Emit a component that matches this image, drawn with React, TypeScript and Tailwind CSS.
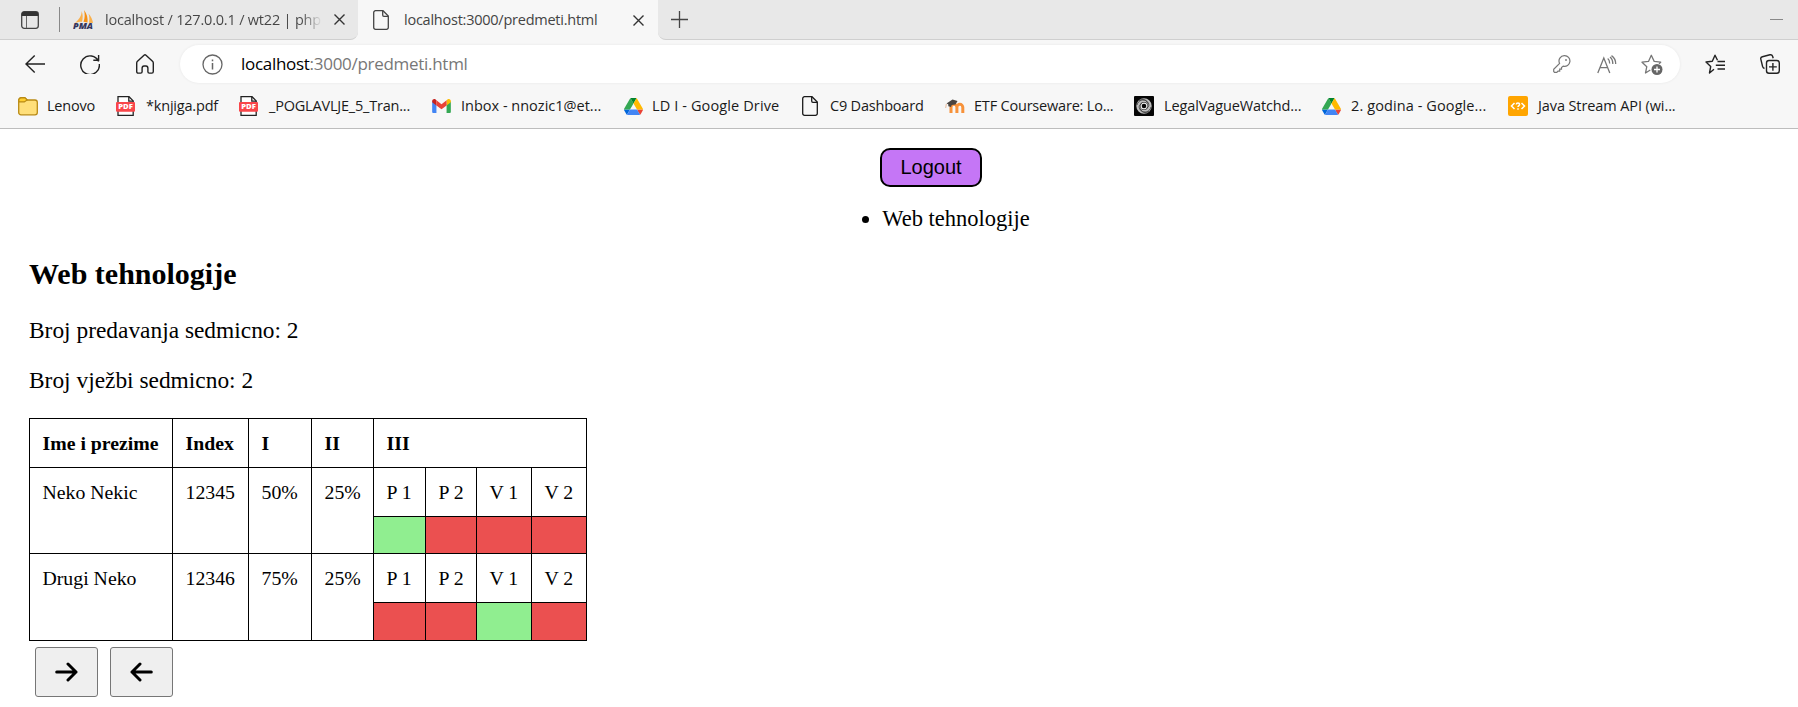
import type { ReactNode } from "react";

function FileIcon() {
  return (
    <svg width="16" height="20" viewBox="0 0 16 20" fill="none" stroke="currentColor" strokeWidth="1.3">
      <path d="M2.7.7H10L15.3 6v11.5a1.8 1.8 0 0 1-1.8 1.8h-11a1.8 1.8 0 0 1-1.8-1.8v-15A1.8 1.8 0 0 1 2.7.7Z" />
      <path d="M9.7.9v4.2c0 .7.5 1.2 1.2 1.2h4.2" />
    </svg>
  );
}

function PdfIcon() {
  return (
    <svg width="19" height="20" viewBox="0 0 19 20">
      <path d="M2 .7h11l4.2 4.2v14.4H2Z" fill="#fff" stroke="#222" strokeWidth="1.3" />
      <path d="M12.8.7v4.4h4.4" fill="none" stroke="#222" strokeWidth="1.3" />
      <rect y="6" width="19" height="9.8" rx="1" fill="#f9464a" />
      <text x="2.2" y="13.4" fontFamily="Open Sans, sans-serif" fontWeight="800" fontSize="6.8" fill="#fff" textLength="14.6" lengthAdjust="spacingAndGlyphs">PDF</text>
    </svg>
  );
}

function FolderIcon() {
  return (
    <svg width="20" height="19" viewBox="0 0 20 19">
      <path d="M.7 3a2.3 2.3 0 0 1 2.3-2.300h3.800L9.200 3H17A2.300 2.300 0 0 1 19.300 5.300v10.200a2.300 2.300 0 0 1-2.300 2.300H3A2.300 2.300 0 0 1 .7 15.500Z" fill="#ffdf7a" stroke="#b98a14" strokeWidth="1.300" />
      <path d="M.9 4.900h5.400L9.200 3 7 .9H3A2.100 2.100 0 0 0 .9 3Z" fill="#ffce2f" stroke="#b98a14" strokeWidth="1.100" />
    </svg>
  );
}

function GmailIcon() {
  return (
    <svg width="19" height="14" viewBox="0 0 18 13.500">
      <path d="M0 2.200V12.300c0 .7.500 1.200 1.200 1.200h2.900V5.300Z" fill="#4285f4" />
      <path d="M13.900 5.300v8.200h2.900c.7 0 1.200-.500 1.200-1.200V2.200Z" fill="#34a853" />
      <path d="M13.900 1.300v4.900L18 3.100V2c0-1.700-2-2.600-3.300-1.600Z" fill="#fbbc04" />
      <path d="M0 2v1.100l4.100 3.100V1.300L3.300.4C2-.5 0 .4 0 2Z" fill="#c5221f" />
      <path d="M4.100 6.200V1.300L9 5l4.900-3.700v4.900L9 9.900Z" fill="#ea4335" />
    </svg>
  );
}

function DriveIcon() {
  return (
    <svg width="19" height="17" viewBox="0 0 87.300 78">
      <path d="m6.600 66.850 3.850 6.650c.8 1.400 1.950 2.500 3.300 3.300l13.750-23.800H0c0 1.550.4 3.100 1.200 4.500Z" fill="#0066da" />
      <path d="M43.650 25 29.900 1.200c-1.350.8-2.500 1.900-3.300 3.300L1.200 48.500A9 9 0 0 0 0 53h27.500Z" fill="#34a853" />
      <path d="M73.550 76.800c1.350-.8 2.500-1.900 3.300-3.300l1.600-2.750L86.100 57.500c.8-1.400 1.200-2.950 1.200-4.500H59.800l5.850 11.500Z" fill="#ea4335" />
      <path d="M43.650 25 57.400 1.200C56.050.4 54.500 0 52.900 0H34.400c-1.600 0-3.150.45-4.500 1.200Z" fill="#00832d" />
      <path d="M59.800 53H27.500L13.750 76.800c1.350.8 2.900 1.200 4.500 1.200h50.800c1.600 0 3.150-.45 4.500-1.200Z" fill="#4285f4" />
      <path d="M73.400 26.500 60.700 4.500c-.8-1.400-1.950-2.500-3.300-3.300L43.650 25 59.800 53h27.450c0-1.550-.4-3.100-1.200-4.500Z" fill="#ffba00" />
    </svg>
  );
}

function MoodleIcon() {
  return (
    <svg width="20" height="14" viewBox="0 0 20 14">
      <path d="M6 14V8.300a2.500 2.500 0 0 1 5.900 0V14M11.900 8.300a2.500 2.500 0 0 1 5.900 0V14" fill="none" stroke="#f7923a" strokeWidth="3" />
      <path d="m1.500 4.500 6-4 5 1.500-2 3.500-3.800.4-.7 2-2.700-.7v-2Z" fill="#4a4440" />
      <path d="m1.300 5-.6 4" stroke="#e5b99a" />
    </svg>
  );
}

function SwirlIcon() {
  return (
    <svg width="20" height="20" viewBox="0 0 20 20" fill="none">
      <rect width="20" height="20" rx="1" fill="#050505" />
      <circle cx="10" cy="10" r="5.800" stroke="#bdbdbd" strokeWidth="3.800" />
      <circle cx="10" cy="10" r="2.900" stroke="#eee" strokeWidth="1.200" />
      <path d="M3 9c1-5 7-6.500 10-3.500s2 6-1 7M17 11c-1 5-7 6.500-10 3.500s-2-6 1-7M5 4.500c3-2 8-1 9 3M15 15.500c-3 2-8 1-9-3" stroke="#333" strokeWidth=".8" />
    </svg>
  );
}

function CodeIcon() {
  return (
    <svg width="20" height="20" viewBox="0 0 20 20" fill="none" stroke="#fff" strokeWidth="1.500">
      <rect width="20" height="20" rx="2" fill="#ffa500" stroke="none" />
      <path d="M6.500 7 3.500 10l3 3M13.500 7l3 3-3 3M8.300 8.600c0-2 3.300-2 3.300 0 0 1-1.600 1.200-1.600 2.500M10 12.200v1.500" />
    </svg>
  );
}

function PmaIcon() {
  return (
    <svg width="21" height="20" viewBox="0 0 21 20">
      <path d="M8.500 1c.5 4-2 8-6.500 12 3-1 5-1.300 7-1.200C10 8 10 4 8.500 1Z" fill="#f9b04c" />
      <path d="M11 0c3 4 4 8 3.500 12.500l-4-.7C12 8 12 4 11 0Z" fill="#f58f13" />
      <path d="M15.500 3.500c2.500 3 4 6 4.500 9.500l-4-.3c.6-3 .5-6-.5-9.200Z" fill="#f9b04c" />
      <text x="0" y="19.300" fontFamily="Open Sans, sans-serif" fontWeight="800" fontStyle="italic" fontSize="8" fill="#34355c" textLength="20" lengthAdjust="spacingAndGlyphs">PMA</text>
    </svg>
  );
}

function CloseIcon() {
  return (
    <svg width="11" height="11" viewBox="0 0 11 11" fill="none" stroke="#333" strokeWidth="1.400">
      <path d="m.5.500 10 10M10.500.500l-10 10" />
    </svg>
  );
}

type Bookmark = { icon: ReactNode; label: string; item: string; slot: string; text: string };

const bookmarks: Bookmark[] = [
  { icon: <FolderIcon />, label: "Lenovo", item: "w-[98px]", slot: "w-[29px]", text: "tracking-[-0.2px]" },
  { icon: <PdfIcon />, label: "*knjiga.pdf", item: "w-[123px]", slot: "w-[30px]", text: "tracking-[-0.2px]" },
  { icon: <PdfIcon />, label: "_POGLAVLJE_5_Tran...", item: "w-[193px]", slot: "w-[30px]", text: "tracking-[-0.2px]" },
  { icon: <GmailIcon />, label: "Inbox - nnozic1@et...", item: "w-[192px]", slot: "w-[29px]", text: "tracking-[0px]" },
  { icon: <DriveIcon />, label: "LD I - Google Drive", item: "w-[178px]", slot: "w-[28px]", text: "tracking-[0.12px]" },
  { icon: <FileIcon />, label: "C9 Dashboard", item: "w-[143px]", slot: "w-[28px]", text: "tracking-[-0.2px]" },
  { icon: <MoodleIcon />, label: "ETF Courseware: Lo...", item: "w-[189px]", slot: "w-[29px]", text: "tracking-[-0.2px]" },
  { icon: <SwirlIcon />, label: "LegalVagueWatchd...", item: "w-[188px]", slot: "w-[30px]", text: "tracking-[-0.12px]" },
  { icon: <DriveIcon />, label: "2. godina - Google...", item: "w-[186px]", slot: "w-[29px]", text: "tracking-[0.1px]" },
  { icon: <CodeIcon />, label: "Java Stream API (wi...", item: "w-[180px]", slot: "w-[30px]", text: "tracking-[-0.1px]" },
];

function TabStrip() {
  return (
    <div className="flex h-10 bg-[#f7f7f7] text-[14.5px] text-[#444]">
      <div className="flex h-10 w-[358px] shrink-0 items-center rounded-br-lg border-b border-[#cfcfcf] bg-[#e8e8e8] pl-[21px]">
        <svg width="18" height="18" viewBox="0 0 18 18" fill="none">
          <rect x=".7" y=".7" width="16.600" height="16.600" rx="2.500" stroke="#444" strokeWidth="1.300" />
          <path d="M.7 5V3A2.300 2.300 0 0 1 3 .7h12A2.300 2.300 0 0 1 17.300 3v2Z" fill="#333" />
          <path d="M5.500 5v12" stroke="#666" />
        </svg>
        <span className="ml-5 h-[25px] w-px bg-[#888]" />
        <span className="ml-[13px]"><PmaIcon /></span>
        <span className="ml-[11px] w-[217px] whitespace-nowrap bg-linear-to-r from-[#444] from-90% to-[#e8e8e8] bg-clip-text leading-6 tracking-[-0.2px] text-transparent">localhost / 127.0.0.1 / wt22 | php</span>
        <span className="ml-3"><CloseIcon /></span>
      </div>
      <div className="flex h-10 w-[300px] shrink-0 items-center rounded-t-lg pl-[15px]">
        <FileIcon />
        <span className="ml-[15px] w-[229px] whitespace-nowrap tracking-[-0.24px]">localhost:3000/predmeti.html</span>
        <CloseIcon />
      </div>
      <div className="flex h-10 grow items-center justify-between rounded-bl-lg border-b border-[#cfcfcf] bg-[#e8e8e8] pr-[15px] pl-[13px]">
        <svg width="17" height="17" viewBox="0 0 17 17" stroke="#444" strokeWidth="1.300"><path d="M8.500 0v17M0 8.500h17" /></svg>
        <span className="h-px w-[13px] bg-[#888]" />
      </div>
    </div>
  );
}

function Toolbar() {
  return (
    <div className="flex h-[48px] items-center pl-[25px] text-[#222]">
      <svg width="20" height="18" viewBox="0 0 20 18" fill="none" stroke="currentColor" strokeWidth="1.400"><path d="M20 9H1M9.700.5 1 9l8.700 8.500" /></svg>
      <svg className="ml-[35px]" width="20" height="20" viewBox="0 0 20 20" fill="none" stroke="currentColor" strokeWidth="1.400"><path d="M18.600 7.500A9.300 9.300 0 1 0 19.300 10M18.600 1v5.200h-5.300" /></svg>
      <svg className="ml-9" width="18" height="20" viewBox="0 0 18 20" fill="none" stroke="currentColor" strokeWidth="1.400"><path d="M8 1.200a1.500 1.500 0 0 1 2 0l6.500 6c.5.500.8 1 .8 1.700v8.600c0 1-.6 1.600-1.500 1.600h-2.500c-.8 0-1.400-.6-1.400-1.400v-3.500c0-1.500-.7-2.200-1.900-2.200H8c-1.200 0-1.900.7-1.900 2.200v3.500c0 .8-.6 1.400-1.400 1.400H2.200c-.9 0-1.500-.6-1.500-1.600V8.900c0-.7.300-1.200.8-1.700Z" /></svg>
      <div className="ml-[26px] flex h-[38px] w-[1500px] items-center rounded-full bg-white pl-[22px] shadow-[0_0_3px_#00000012]">
        <svg width="21" height="21" viewBox="0 0 21 21" fill="none" stroke="#666" strokeWidth="1.300"><circle cx="10.500" cy="10.500" r="9.500" /><path d="M10.500 9v6.500M10.500 5.500v1.700" strokeWidth="1.500" /></svg>
        <span className="ml-[18px] w-[1312px] whitespace-nowrap text-[17px] tracking-[-0.29px] text-[#777]"><span className="text-black">localhost</span>:3000/predmeti.html</span>
        <svg width="18" height="18" viewBox="0 0 18 18" fill="none" stroke="#777" strokeWidth="1.200"><path d="M11.500.7a5.300 5.300 0 1 1-1.300 10.400L8.500 12.500v1.700H6.700v1.900H5l-1.200 1.200H1.500l-.8-.8v-2.300l5.900-5.800A5.300 5.300 0 0 1 11.500.7Z" /><circle cx="13" cy="5" r=".9" fill="#777" stroke="none" /></svg>
        <svg className="ml-[26px]" width="20" height="19" viewBox="0 0 20 19" fill="none" stroke="#777" strokeWidth="1.300"><path d="M.8 18 6.800 3l6 15M2.800 12.700h8M10.700 3.500c1.500 1 2 3 2 5M13 2c2.200 1.700 2.800 4 2.800 7M14.500.6c3 2 4.200 5 4.200 8.400" /></svg>
        <svg className="ml-6" width="22" height="21" viewBox="0 0 22 21" fill="none" stroke="#777" strokeWidth="1.300"><path d="M9.300 16 4.500 19l1.300-6.300L1 8.200l6.500-.8L10.300 1.300l2.900 6.100 6.500.8-1.700 1.600" strokeLinejoin="round" /><circle cx="16" cy="15.500" r="5.500" fill="#666" stroke="none" /><path d="M16 12.500v6M13 15.500h6" stroke="#fff" /></svg>
      </div>
      <svg className="ml-[25px]" width="20" height="20" viewBox="0 0 20 20" fill="none" stroke="currentColor" strokeWidth="1.400"><path d="M9 15.200 4.500 19l1.200-6.500L1 8l6.300-.8L10 1.200l2.500 5M12.500 7.500H20M10.800 11.300H20M12.500 15H20" strokeLinejoin="round" /></svg>
      <svg className="ml-[35px]" width="20" height="20" viewBox="0 0 20 20" fill="none" stroke="currentColor" strokeWidth="1.400"><rect x="6.500" y="6.500" width="12.800" height="12.800" rx="2.500" /><path d="M12.900 9v7.800M9 12.900h7.800M4.500 14.500c-1-.3-1.600-1-1.900-2L.8 5.200C.5 4 1.200 3 2.400 2.700l7.500-1.900c1.300-.3 2.300.3 2.700 1.500l.6 2" /></svg>
    </div>
  );
}

function BookmarkBar() {
  return (
    <div className="flex h-[40px] items-center pb-[4px] pl-[18px] text-[14.5px] text-[#1a1a1a]">
      {bookmarks.map((b) => (
        <div key={b.label} className={`flex h-6 shrink-0 items-center ${b.item}`}>
          <span className={`shrink-0 ${b.slot}`}>{b.icon}</span>
          <span className={`whitespace-nowrap ${b.text}`}>{b.label}</span>
        </div>
      ))}
    </div>
  );
}

const students = [
  { name: "Neko Nekic", index: "12345", first: "50%", second: "25%", present: [true, false, false, false] },
  { name: "Drugi Neko", index: "12346", first: "75%", second: "25%", present: [false, false, true, false] },
];

const cell = "border-r border-b border-black pl-[12.5px] pt-[12px] leading-6 whitespace-nowrap";

function Attendance() {
  return (
    <div className="grid w-[558px] grid-cols-[143px_76px_63px_62px_52px_51px_55px_55px] grid-rows-[49px_49px_37px_49px_38px] border-t border-l border-black text-[19.8px]">
      {["Ime i prezime", "Index", "I", "II"].map((h) => (
        <div key={h} className={`font-bold ${cell}`}>{h}</div>
      ))}
      <div className={`col-span-4 font-bold ${cell}`}>III</div>
      {students.map((s) => (
        <div key={s.index} className="contents">
          {[s.name, s.index, s.first, s.second].map((v) => (
            <div key={v} className={`row-span-2 ${cell}`}>{v}</div>
          ))}
          {["P 1", "P 2", "V 1", "V 2"].map((v) => (
            <div key={v} className={cell}>{v}</div>
          ))}
          {s.present.map((p, i) => (
            <div key={i} className={`border-r border-b border-black ${p ? "bg-[#90ee90]" : "bg-[#eb5050]"}`} />
          ))}
        </div>
      ))}
    </div>
  );
}

function ArrowButton({ left = false }: { left?: boolean }) {
  return (
    <button className="flex h-[50px] w-[63px] items-center justify-center rounded-[3px] border border-[#767676] bg-[#efefef]">
      <svg className={left ? "-scale-x-100" : ""} width="23" height="20" viewBox="0 0 23 20" fill="none" stroke="#000" strokeWidth="3" strokeLinecap="round" strokeLinejoin="round">
        <path d="M1.700 10H21M13 2l8 8-8 8" />
      </svg>
    </button>
  );
}

export default function App() {
  return (
    <div className="h-[707px] w-[1798px] overflow-hidden bg-white font-['Liberation_Serif',serif] text-black">
      <header className="h-[129px] border-b border-[#bdbdbd] bg-[#f7f7f7] font-['Open_Sans',sans-serif]">
        <TabStrip />
        <Toolbar />
        <BookmarkBar />
      </header>
      <nav className="flex flex-col items-center pt-[19px] pl-[64px]">
        <button className="h-[39px] w-[102px] rounded-[10px] border-2 border-black bg-[#c576f6] pb-px font-['Liberation_Sans',sans-serif] text-[20px]">Logout</button>
        <ul className="mt-[18px] ml-[50px] list-disc text-[22.5px] leading-[28px]">
          <li>Web tehnologije</li>
        </ul>
      </nav>
      <main className="px-[29px] text-[23.4px]">
        <h2 className="mt-[24px] text-[30px] leading-[34px] font-bold">Web tehnologije</h2>
        <p className="mt-[25px] leading-[28px]">Broj predavanja sedmicno: 2</p>
        <p className="mt-[22px] mb-[24px] leading-[28px]">Broj vježbi sedmicno: 2</p>
        <Attendance />
        <div className="mt-[6px] ml-[6px] flex gap-3">
          <ArrowButton />
          <ArrowButton left />
        </div>
      </main>
    </div>
  );
}
